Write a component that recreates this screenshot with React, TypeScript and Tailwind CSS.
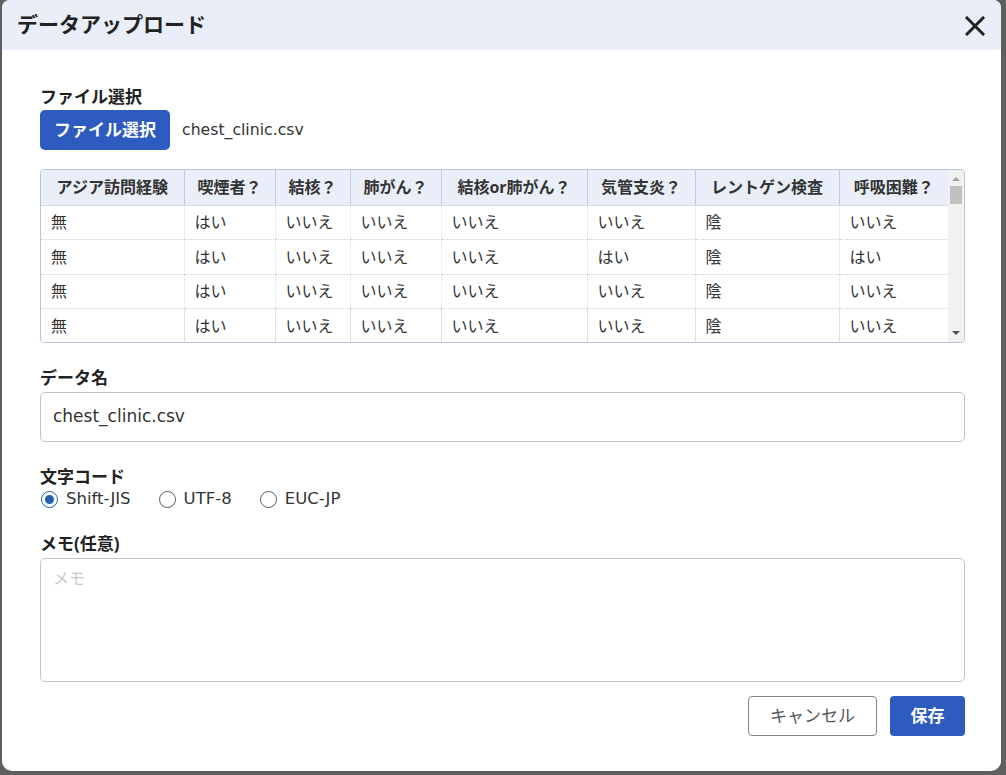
import React from "react";

const cols = [143, 91, 75, 91, 146, 108, 144, 109];
const headers = ["アジア訪問経験", "喫煙者？", "結核？", "肺がん？", "結核or肺がん？", "気管支炎？", "レントゲン検査", "呼吸困難？"];
const rows = [
  ["無", "はい", "いいえ", "いいえ", "いいえ", "いいえ", "陰", "いいえ"],
  ["無", "はい", "いいえ", "いいえ", "いいえ", "はい", "陰", "はい"],
  ["無", "はい", "いいえ", "いいえ", "いいえ", "いいえ", "陰", "いいえ"],
  ["無", "はい", "いいえ", "いいえ", "いいえ", "いいえ", "陰", "いいえ"],
];

const latin = { fontFamily: '"DejaVu Sans", "Noto Sans CJK JP", sans-serif' };

function Radio({ checked, label }: { checked?: boolean; label: string }) {
  return (
    <label className="flex items-center gap-[8px]">
      <span
        className={
          "flex h-[17px] w-[17px] items-center justify-center rounded-full border " +
          (checked ? "border-[#1f5fb0]" : "border-[#555a66]")
        }
      >
        {checked && <span className="h-[9px] w-[9px] rounded-full bg-[#1f5fb0]" />}
      </span>
      <span className="text-[16.5px] leading-[22px] text-[#333]" style={latin}>
        {label}
      </span>
    </label>
  );
}

export default function App() {
  const font = { fontFamily: '"Open Sans", "Noto Sans CJK JP", sans-serif' };
  return (
    <div className="h-[775px] w-[1006px] overflow-hidden bg-[#5f5f5f]" style={font}>
      <div className="ml-[2px] flex h-[771px] w-[999px] flex-col overflow-hidden rounded-b-[10px] rounded-t-[8px] bg-white">
        <div className="flex h-[50px] shrink-0 items-center justify-between bg-[#e9eef8] pl-[15px] pr-[16px]">
          <div className="text-[21px] font-bold text-[#222]">データアップロード</div>
          <svg width="20" height="20" viewBox="0 0 20 20" className="mt-[1px]">
            <path d="M2 2 L18 18 M18 2 L2 18" stroke="#222" strokeWidth="3" strokeLinecap="square" />
          </svg>
        </div>
        <div className="flex flex-col px-[38px] pt-[36px]">
          <div className="text-[17px] font-bold leading-[22px] text-[#222]">ファイル選択</div>
          <div className="mt-[2px] flex items-center gap-[12px]">
            <button className="h-[40px] w-[130px] rounded-[5px] bg-[#2e5bbf] text-[17px] font-bold text-white">
              ファイル選択
            </button>
            <span className="text-[15.7px] text-[#333]" style={latin}>
              chest_clinic.csv
            </span>
          </div>

          <div className="mt-[19px] flex h-[174px] w-[925px] overflow-hidden rounded-[4px] border border-[#b9c5de]">
            <table className="table-fixed border-collapse" style={{ width: 907 }}>
              <colgroup>
                {cols.map((w, i) => (
                  <col key={i} style={{ width: w }} />
                ))}
              </colgroup>
              <thead>
                <tr className="h-[35px] bg-[#e9eef8]">
                  {headers.map((h, i) => (
                    <th
                      key={i}
                      className={
                        "border-b border-[#d6dce8] p-0 text-center text-[16px] font-bold text-[#333] " +
                        (i > 0 ? "border-l border-l-[#bfcbe3]" : "")
                      }
                    >
                      {h}
                    </th>
                  ))}
                </tr>
              </thead>
              <tbody>
                {rows.map((r, ri) => (
                  <tr key={ri} className="h-[34.5px]">
                    {r.map((c, ci) => (
                      <td
                        key={ci}
                        className={
                          "whitespace-nowrap py-0 pl-[10px] text-[16px] text-[#333] " +
                          (ri < rows.length - 1 ? "border-b border-dotted border-b-[#d0d0d0] " : "") +
                          (ci > 0 ? "border-l border-l-[#dcdfe3]" : "")
                        }
                      >
                        {c}
                      </td>
                    ))}
                  </tr>
                ))}
              </tbody>
            </table>
            <div className="flex w-[16px] flex-col items-center bg-[#f1f1f1]">
              <svg width="8" height="6" viewBox="0 0 8 6" className="mt-[6px]">
                <path d="M0 5 L4 1 L8 5 Z" fill="#a3a3a3" />
              </svg>
              <div className="mt-[4px] h-[18px] w-[12px] bg-[#c1c1c1]" />
              <div className="flex-1" />
              <svg width="8" height="6" viewBox="0 0 8 6" className="mb-[6px]">
                <path d="M0 1 L4 5 L8 1 Z" fill="#505050" />
              </svg>
            </div>
          </div>

          <div className="mt-[24px] text-[17px] font-bold leading-[22px] text-[#222]">データ名</div>
          <div
            className="mt-[3px] flex h-[50px] w-[925px] items-center rounded-[5px] border border-[#c4c4c4] px-[12px] text-[17px] text-[#333]"
            style={latin}
          >
            chest_clinic.csv
          </div>

          <div className="mt-[24px] text-[17px] font-bold leading-[22px] text-[#222]">文字コード</div>
          <div className="ml-[1px] flex items-center gap-[28px]">
            <Radio checked label="Shift-JIS" />
            <Radio label="UTF-8" />
            <Radio label="EUC-JP" />
          </div>

          <div className="mt-[23px] text-[17px] font-bold leading-[22px] text-[#222]">メモ(任意)</div>
          <div className="mt-[3px] h-[124px] w-[925px] rounded-[5px] border border-[#c4c4c4] px-[12px] pt-[7px] text-[16px] text-[#c8c8c8]">
            メモ
          </div>

          <div className="mt-[14px] flex w-[925px] justify-end gap-[13px]">
            <button className="h-[40px] w-[129px] rounded-[4px] border border-[#80808e] text-[17px] text-[#555]">
              キャンセル
            </button>
            <button className="h-[40px] w-[75px] rounded-[4px] bg-[#2e5bbf] text-[17px] font-bold text-white">
              保存
            </button>
          </div>
        </div>
      </div>
    </div>
  );
}
